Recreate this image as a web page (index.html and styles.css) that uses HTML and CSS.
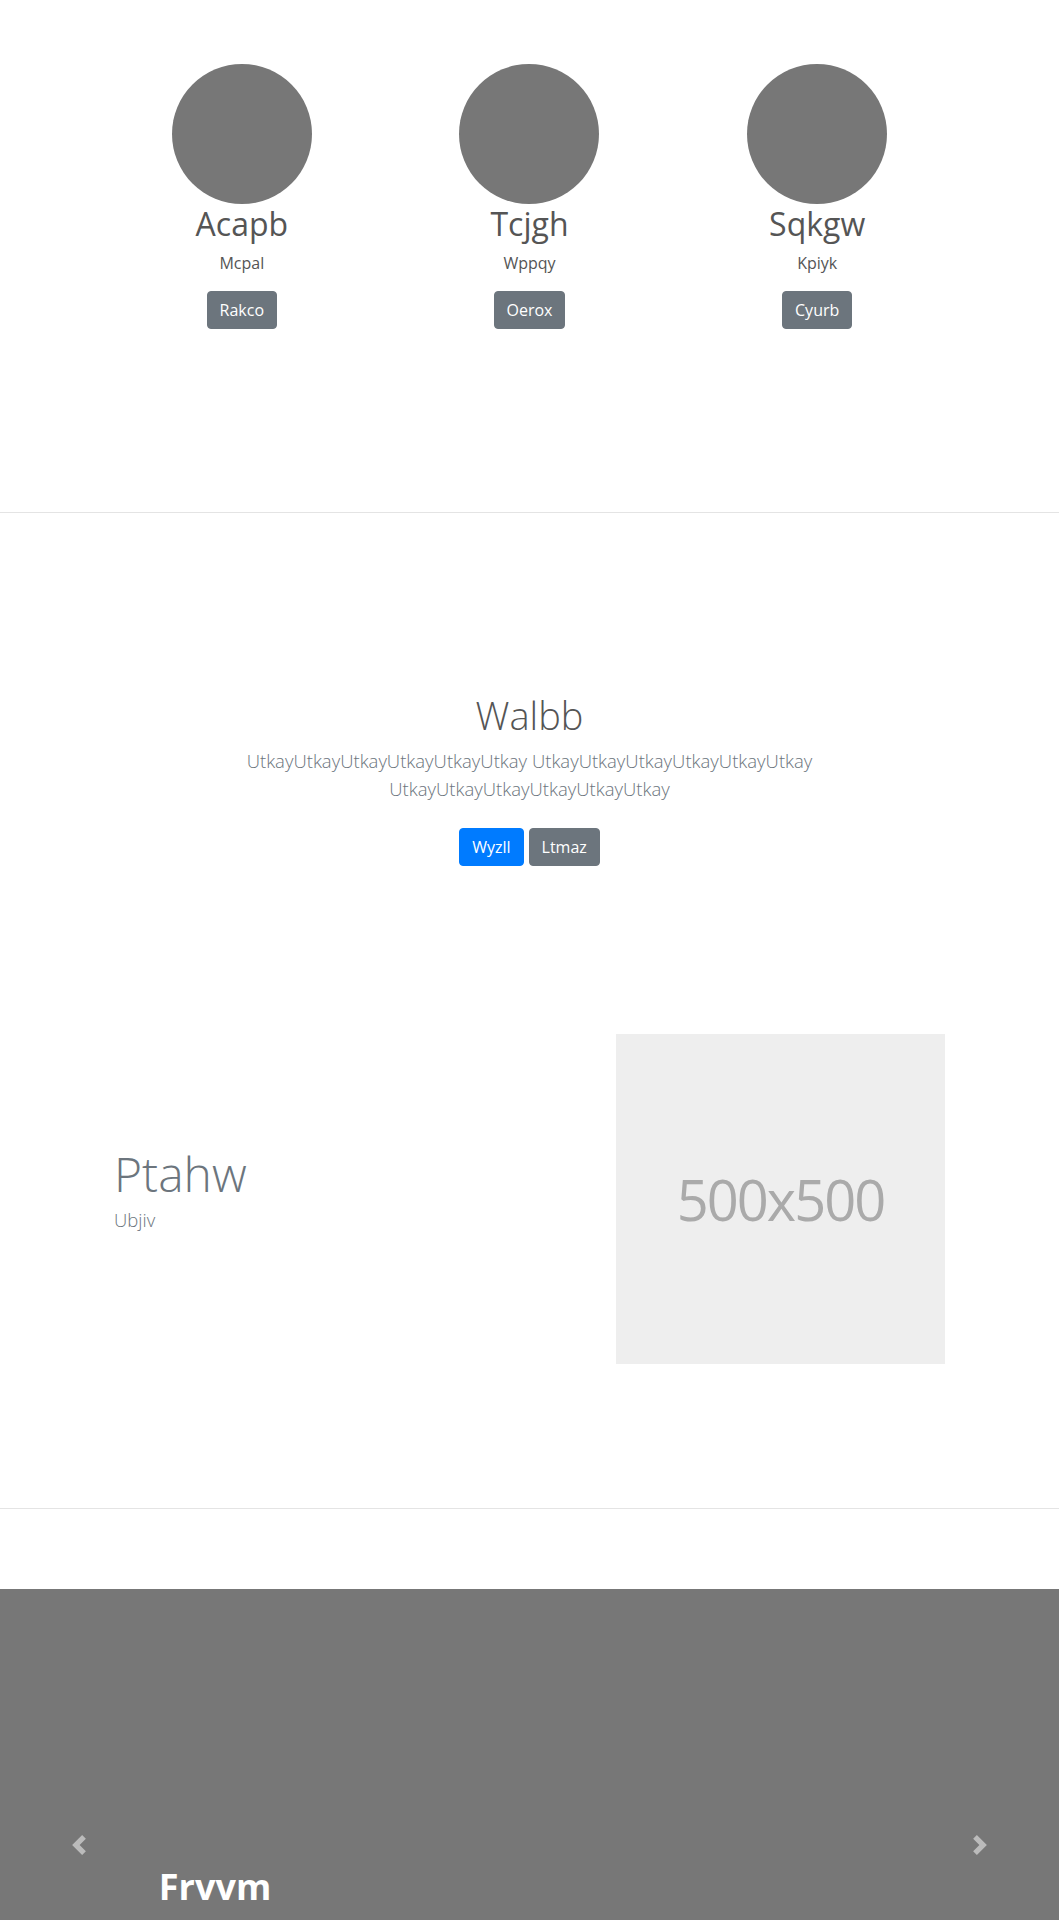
FILE: index.html
```html
<!DOCTYPE html>
<html lang="en">
<head>
<meta charset="utf-8">
<title>Page</title>
<link rel="stylesheet" href="styles.css">
</head>
<body>
  <section class="team">
    <div class="team-row">
      <div class="member">
        <div class="avatar"></div>
        <h2 class="member-name">Acapb</h2>
        <p class="member-role">Mcpal</p>
        <a class="btn btn-secondary" href="#">Rakco</a>
      </div>
      <div class="member">
        <div class="avatar"></div>
        <h2 class="member-name">Tcjgh</h2>
        <p class="member-role">Wppqy</p>
        <a class="btn btn-secondary" href="#">Oerox</a>
      </div>
      <div class="member">
        <div class="avatar"></div>
        <h2 class="member-name">Sqkgw</h2>
        <p class="member-role">Kpiyk</p>
        <a class="btn btn-secondary" href="#">Cyurb</a>
      </div>
    </div>
  </section>

  <section class="hero">
    <h1 class="hero-title">Walbb</h1>
    <p class="lead hero-lead">UtkayUtkayUtkayUtkayUtkayUtkay UtkayUtkayUtkayUtkayUtkayUtkay UtkayUtkayUtkayUtkayUtkayUtkay</p>
    <div class="hero-actions">
      <a class="btn btn-primary" href="#">Wyzll</a>
      <a class="btn btn-secondary" href="#">Ltmaz</a>
    </div>
  </section>

  <section class="feature">
    <div class="feature-row">
      <div class="feature-text">
        <h2 class="display-title">Ptahw</h2>
        <p class="lead feature-lead">Ubjiv</p>
      </div>
      <div class="placeholder">500x500</div>
    </div>
  </section>

  <section class="carousel">
    <a class="carousel-control prev" href="#" aria-label="Previous">
      <svg class="carousel-icon" viewBox="0 0 8 8" width="20" height="20"><path d="M5.25 0l-4 4 4 4 1.5-1.5L4.25 4l2.5-2.5L5.25 0z" fill="#fff"/></svg>
    </a>
    <a class="carousel-control next" href="#" aria-label="Next">
      <svg class="carousel-icon" viewBox="0 0 8 8" width="20" height="20"><path d="M2.75 0l-1.5 1.5L3.75 4l-2.5 2.5L2.75 8l4-4-4-4z" fill="#fff"/></svg>
    </a>
    <div class="carousel-caption">
      <h3 class="caption-title">Frvvm</h3>
    </div>
  </section>
</body>
</html>
```

FILE: styles.css
```css
html, body {
  margin: 0;
  padding: 0;
}

body {
  font-family: "Open Sans", "Noto Sans", "Liberation Sans", sans-serif;
  font-size: 16px;
  line-height: 1.5;
  color: #555;
  background: #fff;
}

p {
  margin: 0 0 16px;
}

h1, h2, h3 {
  margin: 0 0 8px;
  line-height: 1.2;
}

.btn {
  display: inline-block;
  font-size: 16px;
  line-height: 1.5;
  padding: 6px 12px;
  border: 1px solid transparent;
  border-radius: 4px;
  color: #fff;
  text-decoration: none;
  font-weight: 400;
}

.btn-secondary {
  background: #6c757d;
  border-color: #6c757d;
}

.btn-primary {
  background: #007bff;
  border-color: #007bff;
}

.lead {
  font-size: 18.5px;
  font-weight: 300;
  line-height: 1.55;
}

/* Team */
.team {
  padding-top: 64px;
  height: 448px;
  border-bottom: 1px solid #e4e4e4;
}

.team-row {
  width: 863px;
  margin: 0 auto;
  display: grid;
  grid-template-columns: repeat(3, 1fr);
}

.member {
  text-align: center;
}

.avatar {
  width: 140px;
  height: 140px;
  border-radius: 50%;
  background: #777;
  margin: 0 auto;
}

.member-name {
  font-size: 32px;
  font-weight: 400;
  color: #555;
  margin-top: 1px;
}

.member-role {
  font-size: 16px;
  color: #555;
}

/* Hero */
.hero {
  padding-top: 180px;
  text-align: center;
}

.hero-title {
  font-size: 38px;
  font-weight: 300;
  color: #555;
}

.hero-lead {
  max-width: 700px;
  margin: 0 auto 24px;
  color: #6c757d;
}

.hero-actions {
  display: flex;
  justify-content: center;
  gap: 5px;
}

/* Feature */
.feature {
  margin-top: 168px;
  padding-bottom: 144px;
  border-bottom: 1px solid #e4e4e4;
}

.feature-row {
  width: 831px;
  margin: 0 auto;
  display: flex;
  align-items: center;
  justify-content: space-between;
}

.display-title {
  font-size: 48px;
  font-weight: 300;
  color: #6c757d;
  margin-bottom: 4px;
}

.feature-lead {
  color: #6c757d;
  margin-bottom: 18px;
}

.placeholder {
  width: 329px;
  height: 330px;
  background: #eee;
  color: #aaa;
  display: flex;
  align-items: center;
  justify-content: center;
  font-size: 56px;
  letter-spacing: -2px;
}

/* Carousel */
.carousel {
  position: relative;
  margin-top: 80px;
  height: 512px;
  background: #777;
}

.carousel-control {
  position: absolute;
  top: 0;
  bottom: 0;
  width: 15%;
  display: flex;
  align-items: center;
  justify-content: center;
}

.carousel-control.prev {
  left: 0;
}

.carousel-control.next {
  right: 0;
}

.carousel-icon {
  opacity: 0.5;
  display: block;
}

.carousel-caption {
  position: absolute;
  left: 15%;
  right: 15%;
  top: 276px;
  color: #fff;
}

.caption-title {
  font-size: 36px;
  font-weight: 700;
  color: #fff;
}
```
